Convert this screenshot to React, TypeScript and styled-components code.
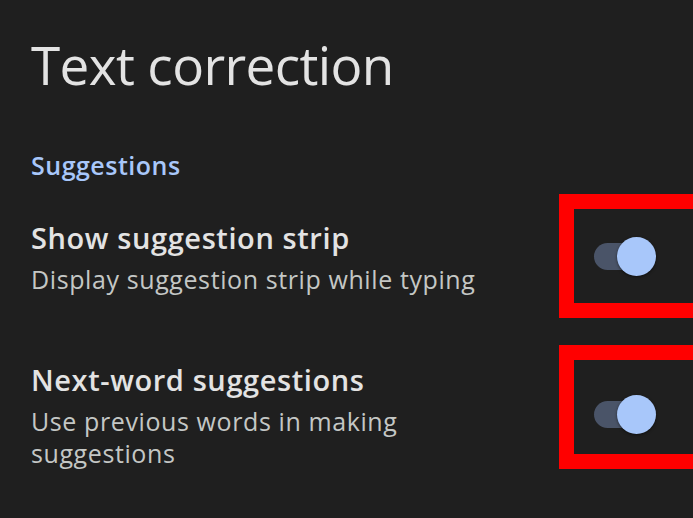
import styled, { createGlobalStyle } from 'styled-components';

const GlobalStyle = createGlobalStyle`
  html, body {
    margin: 0;
    padding: 0;
    background: #1f1f1f;
    overflow: hidden;
  }
  body {
    font-family: "Open Sans", Roboto, sans-serif;
    -webkit-font-smoothing: antialiased;
  }
`;

interface SettingProps {
  title: string;
  summary: string;
  frameOffset?: number;
}

const Setting: React.FC<SettingProps> = ({ title, summary, frameOffset = 0 }) => (
  <ScRow>
    <ScText>
      <ScRowTitle>{title}</ScRowTitle>
      <ScSummary>{summary}</ScSummary>
    </ScText>
    <ScSwitchArea>
      <ScSwitch role="switch" aria-checked="true">
        <ScTrack />
        <ScThumb />
      </ScSwitch>
      <ScFrame $offset={frameOffset} />
    </ScSwitchArea>
  </ScRow>
);

export default function App() {
  return (
    <>
      <GlobalStyle />
      <ScPage>
        <ScTitle>Text correction</ScTitle>
        <ScSection>Suggestions</ScSection>
        <Setting
          title="Show suggestion strip"
          summary="Display suggestion strip while typing"
        />
        <Setting
          title="Next-word suggestions"
          summary="Use previous words in making suggestions"
          frameOffset={-7}
        />
      </ScPage>
    </>
  );
}

const ScPage = styled.div`
  width: 693px;
  height: 518px;
  padding-left: 32px;
  box-sizing: border-box;
  display: flex;
  flex-direction: column;
`;

const ScTitle = styled.h1`
  margin: 38px 0 0 -1px;
  font-size: 53px;
  line-height: 53px;
  font-weight: 400;
  letter-spacing: -0.6px;
  color: #e3e3e3;
`;

const ScSection = styled.div`
  margin: 59px 0 5px -1px;
  font-size: 25px;
  line-height: 30px;
  font-weight: 600;
  letter-spacing: 0.5px;
  color: #a8c7fa;
`;

const ScRow = styled.div`
  display: flex;
  align-items: center;
  padding: 32px 0;
`;

const ScText = styled.div`
  flex: 1;
  min-width: 0;
  padding-right: 24px;
  margin-left: -1px;
`;

const ScRowTitle = styled.div`
  font-size: 29px;
  line-height: 42px;
  font-weight: 600;
  letter-spacing: 0.6px;
  color: #e3e3e3;
`;

const ScSummary = styled.div`
  margin-top: 4px;
  font-size: 25px;
  line-height: 32px;
  letter-spacing: 0.6px;
  color: #c4c7c5;
  max-width: 480px;
`;

const ScSwitchArea = styled.div`
  position: relative;
  flex-shrink: 0;
  width: 134px;
  height: 39px;
  display: flex;
  align-items: center;
  padding-left: 35px;
  box-sizing: border-box;
`;

const ScSwitch = styled.div`
  position: relative;
  width: 62px;
  height: 39px;
  display: flex;
  align-items: center;
`;

const ScTrack = styled.div`
  width: 56px;
  height: 27px;
  border-radius: 14px;
  background: #4a5468;
`;

const ScThumb = styled.div`
  position: absolute;
  top: 0;
  left: 23px;
  width: 39px;
  height: 39px;
  border-radius: 50%;
  background: #a8c7fa;
  box-shadow: 0 1px 3px rgba(0, 0, 0, 0.5);
`;

const ScFrame = styled.div<{ $offset: number }>`
  position: absolute;
  left: 0;
  top: ${p => -42.5 + p.$offset}px;
  width: 150px;
  height: 124px;
  border: 15px solid #ff0000;
  box-sizing: border-box;
  pointer-events: none;
`;
